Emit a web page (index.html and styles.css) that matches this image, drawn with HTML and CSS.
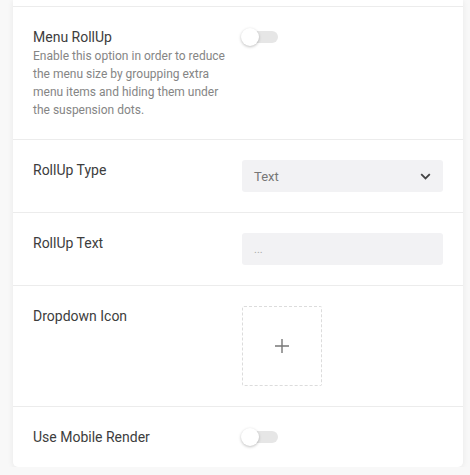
FILE: index.html
```html
<!DOCTYPE html>
<html lang="en">

<head>
    <meta charset="UTF-8">
    <meta name="viewport" content="width=device-width, initial-scale=1.0">
    <title>Menu Settings</title>
    <link rel="stylesheet" href="styles.css">
</head>

<body>
<div class="panel">
    <!-- Menu RollUp -->
    <div class="row">
        <div class="label-col">
            <div class="label">Menu RollUp</div>
            <p class="desc">Enable this option in order to reduce the menu size by groupping extra menu items and hiding them under the suspension dots.</p>
        </div>
        <div class="control">
            <span class="toggle"><span class="knob"></span></span>
        </div>
    </div>

    <!-- RollUp Type -->
    <div class="row">
        <div class="label-col">
            <div class="label">RollUp Type</div>
        </div>
        <div class="control">
            <div class="select">
                <span>Text</span>
                <svg width="11" height="7" viewBox="0 0 11 7"><path d="M1.2 1.2 L5.5 5.5 L9.8 1.2" fill="none" stroke="#444" stroke-width="1.8"/></svg>
            </div>
        </div>
    </div>

    <!-- RollUp Text -->
    <div class="row">
        <div class="label-col">
            <div class="label">RollUp Text</div>
        </div>
        <div class="control">
            <div class="input">...</div>
        </div>
    </div>

    <!-- Dropdown Icon -->
    <div class="row">
        <div class="label-col">
            <div class="label">Dropdown Icon</div>
        </div>
        <div class="control">
            <div class="icon-picker">
                <svg width="14" height="14" viewBox="0 0 14 14"><path d="M7 0 V14 M0 7 H14" stroke="#777" stroke-width="1.4"/></svg>
            </div>
        </div>
    </div>

    <!-- Use Mobile Render -->
    <div class="row">
        <div class="label-col">
            <div class="label">Use Mobile Render</div>
        </div>
        <div class="control">
            <span class="toggle"><span class="knob"></span></span>
        </div>
    </div>
</div>
</body>

</html>
```

FILE: styles.css
```css
body {
    font-family: 'Roboto', sans-serif;
    background-color: #f8f8f8;
    margin: 0;
    padding: 0 7px 0 13px;
    color: #333;
}

.panel {
    background-color: #fff;
    padding-top: 6px;
    border-radius: 0 0 5px 5px;
    box-shadow: 0 1px 6px rgba(0, 0, 0, 0.07);
}

.row {
    display: grid;
    grid-template-columns: 1fr 1fr;
    column-gap: 8px;
    padding: 20px;
    border-top: 1px solid #ececec;
}

.label {
    font-size: 14px;
    line-height: 20px;
    color: #3d3d3d;
}

.desc {
    margin: 0;
    font-size: 12px;
    line-height: 18px;
    color: #858585;
}

.control {
    display: flex;
    align-items: flex-start;
}

.toggle {
    position: relative;
    display: block;
    width: 36px;
    height: 12px;
    margin-top: 4px;
    border-radius: 6px;
    background-color: #e6e6e6;
}

.toggle .knob {
    position: absolute;
    left: -1px;
    top: -3px;
    width: 18px;
    height: 18px;
    border-radius: 50%;
    background-color: #fff;
    box-shadow: 0 1px 3px rgba(0, 0, 0, 0.25);
}

.select,
.input {
    width: 100%;
    height: 32px;
    box-sizing: border-box;
    padding: 0 12px;
    border-radius: 3px;
    background-color: #f2f2f4;
    display: flex;
    align-items: center;
    justify-content: space-between;
}

.select span {
    font-size: 13px;
    color: #777;
}

.input {
    font-size: 11px;
    color: #aaa;
}

.icon-picker {
    width: 80px;
    height: 80px;
    box-sizing: border-box;
    border: 1px dashed #dcdcdc;
    border-radius: 2px;
    display: flex;
    align-items: center;
    justify-content: center;
}
```
